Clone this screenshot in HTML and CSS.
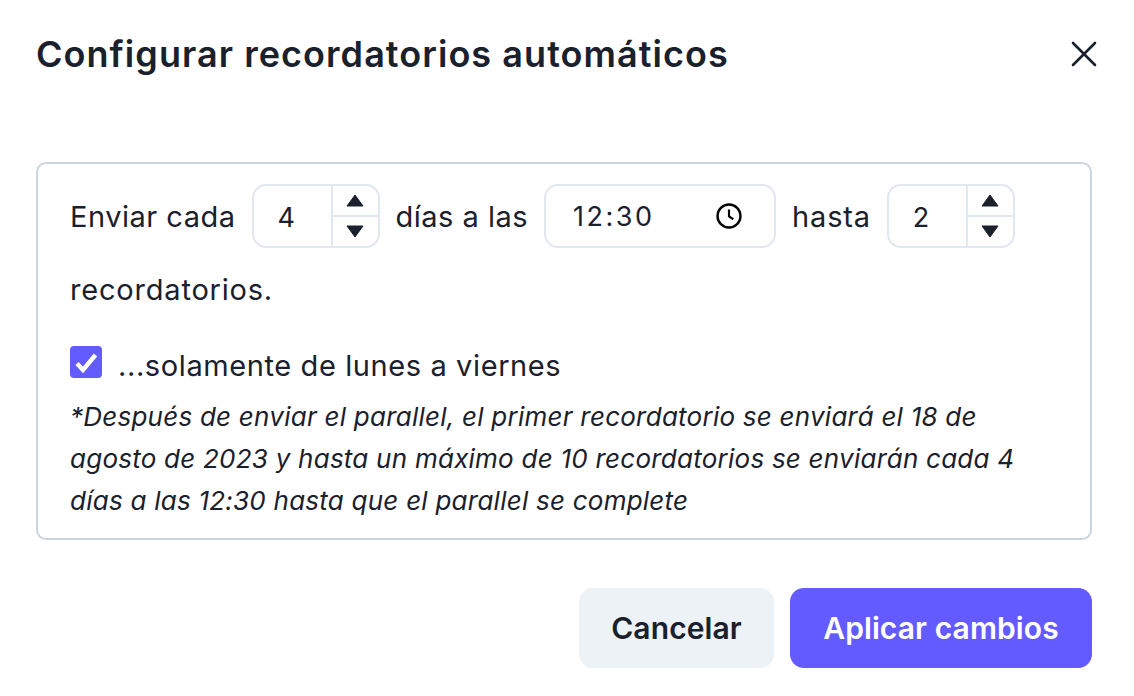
FILE: index.html
```html
<!DOCTYPE html>
<html lang="es">
<head>
    <meta charset="UTF-8">
    <title>Configurar recordatorios</title>
    <link rel="stylesheet" href="styles.css">
</head>
<body>
    <div class="dialog">
        <div class="header">
            <h1 class="title">Configurar recordatorios automáticos</h1>
            <svg class="close" viewBox="0 0 26 26" width="26" height="26"><path d="M2 2 L24 24 M24 2 L2 24" stroke="#1a202c" stroke-width="2.6" stroke-linecap="round"/></svg>
        </div>
        <div class="box">
            <div class="sentence">
                <span class="word">Enviar cada</span>
                <div class="number number-first">
                    <div class="value">4</div>
                    <div class="spinner">
                        <div class="spin spin-up"><svg viewBox="0 0 18 13" width="18" height="13"><path d="M9 1 L17 12 H1 Z" fill="#1a202c" stroke="#1a202c" stroke-linejoin="round"/></svg></div>
                        <div class="spin"><svg viewBox="0 0 18 13" width="18" height="13"><path d="M1 1 H17 L9 12 Z" fill="#1a202c" stroke="#1a202c" stroke-linejoin="round"/></svg></div>
                    </div>
                </div>
                <span class="word">días a las</span>
                <div class="time">
                    <span class="time-value">12:30</span>
                    <svg viewBox="0 0 24 24" width="26" height="26"><circle cx="12" cy="12" r="10.6" fill="none" stroke="#000" stroke-width="2.2"/><path d="M12 6 V12.4 L16 15" fill="none" stroke="#000" stroke-width="2"/></svg>
                </div>
                <span class="word word-wide">hasta</span>
                <div class="number">
                    <div class="value">2</div>
                    <div class="spinner">
                        <div class="spin spin-up"><svg viewBox="0 0 18 13" width="18" height="13"><path d="M9 1 L17 12 H1 Z" fill="#1a202c" stroke="#1a202c" stroke-linejoin="round"/></svg></div>
                        <div class="spin"><svg viewBox="0 0 18 13" width="18" height="13"><path d="M1 1 H17 L9 12 Z" fill="#1a202c" stroke="#1a202c" stroke-linejoin="round"/></svg></div>
                    </div>
                </div>
                <span class="word word-wide">recordatorios.</span>
            </div>
            <div class="weekdays">
                <div class="checkbox"><svg viewBox="0 0 32 32" width="32" height="32"><path d="M7 17.5 L13 24 L25.5 9" fill="none" stroke="#fff" stroke-width="4.4"/></svg></div>
                <span class="weekdays-label">...solamente de lunes a viernes</span>
            </div>
            <p class="note">*Después de enviar el parallel, el primer recordatorio se enviará el 18 de agosto de 2023 y hasta un máximo de 10 recordatorios se enviarán cada 4 días a las 12:30 hasta que el parallel se complete</p>
        </div>
        <div class="actions">
            <button class="button button-cancel">Cancelar</button>
            <button class="button button-apply">Aplicar cambios</button>
        </div>
    </div>
</body>
</html>
```

FILE: styles.css
```css
html, body {
    margin: 0;
    padding: 0;
    background-color: white;
}
body {
    font-family: Inter, "Noto Sans", sans-serif;
    color: #1a202c;
}
.dialog {
    width: 1134px;
    height: 696px;
    box-sizing: border-box;
    padding: 30px 42px 28px 36px;
    overflow: hidden;
}
.header {
    display: flex;
    justify-content: space-between;
    align-items: center;
    height: 48px;
}
.title {
    margin: 0;
    font-size: 36px;
    font-weight: 600;
    letter-spacing: 1.05px;
}
.close {
    margin-right: -5px;
}
.box {
    box-sizing: border-box;
    height: 378px;
    margin-top: 84px;
    padding: 20px 32px 0;
    border: 2px solid #cbd5e0;
    border-radius: 10px;
}
.sentence {
    display: flex;
    flex-wrap: wrap;
    align-items: center;
    column-gap: 16px;
    row-gap: 18px;
    font-size: 29px;
    line-height: 44px;
    letter-spacing: 0.5px;
}
.word {
    padding-top: 2px;
}
.word-wide {
    letter-spacing: 0.8px;
}
.number, .time {
    box-sizing: border-box;
    height: 64px;
    display: flex;
    border: 2px solid #e2e8f0;
    border-radius: 14px;
}
.number {
    width: 128px;
}
.value {
    width: 77px;
    padding-left: 24px;
    box-sizing: border-box;
    line-height: 64px;
    font-size: 27px;
    letter-spacing: 0;
}
.spinner {
    flex: 1;
    display: flex;
    flex-direction: column;
    border-left: 2px solid #e2e8f0;
}
.spin {
    flex: 1;
    display: flex;
    align-items: center;
    justify-content: center;
}
.spin-up {
    border-bottom: 2px solid #e2e8f0;
}
.time {
    width: 232px;
    align-items: center;
    justify-content: space-between;
    padding: 0 32px 0 27px;
}
.time-value {
    padding-top: 2px;
    font-size: 27px;
    line-height: 60px;
    letter-spacing: 2.5px;
}
.weekdays {
    display: flex;
    align-items: flex-start;
    gap: 16px;
    margin-top: 34px;
    font-size: 29px;
    letter-spacing: 0.6px;
}
.weekdays-label {
    line-height: 40px;
}
.checkbox {
    width: 32px;
    height: 32px;
    border-radius: 4px;
    background-color: #635bff;
}
.checkbox svg {
    display: block;
}
.note {
    max-width: 950px;
    margin: 10px 0 0;
    font-size: 26px;
    font-style: italic;
    line-height: 42px;
    letter-spacing: 0.24px;
}
.actions {
    display: flex;
    justify-content: flex-end;
    gap: 16px;
    margin-top: 48px;
}
.button {
    height: 80px;
    border: none;
    border-radius: 14px;
    font-family: inherit;
    font-size: 30px;
    font-weight: 600;
    letter-spacing: 0.1px;
}
.button-cancel {
    width: 195px;
    background-color: #edf2f7;
    color: #1a202c;
}
.button-apply {
    width: 302px;
    background-color: #635bff;
    color: white;
}
```
